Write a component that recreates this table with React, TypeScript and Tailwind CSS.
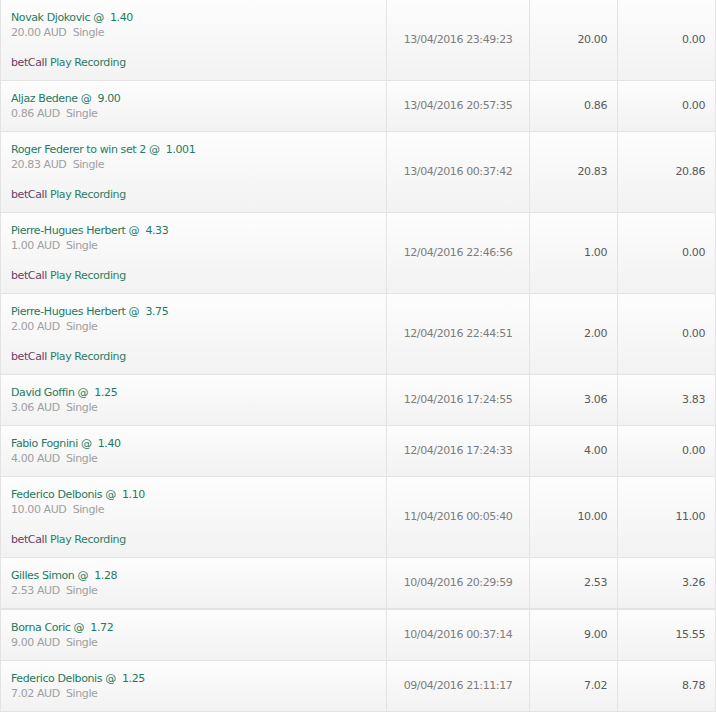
import React from 'react'

type Bet = {
  name: string
  odds: string
  stake: string
  date: string
  amount: string
  ret: string
  recording?: boolean
  thick?: boolean
}

const bets: Bet[] = [
  { name: 'Novak Djokovic', odds: '1.40', stake: '20.00', date: '13/04/2016 23:49:23', amount: '20.00', ret: '0.00', recording: true },
  { name: 'Aljaz Bedene', odds: '9.00', stake: '0.86', date: '13/04/2016 20:57:35', amount: '0.86', ret: '0.00' },
  { name: 'Roger Federer to win set 2', odds: '1.001', stake: '20.83', date: '13/04/2016 00:37:42', amount: '20.83', ret: '20.86', recording: true },
  { name: 'Pierre-Hugues Herbert', odds: '4.33', stake: '1.00', date: '12/04/2016 22:46:56', amount: '1.00', ret: '0.00', recording: true },
  { name: 'Pierre-Hugues Herbert', odds: '3.75', stake: '2.00', date: '12/04/2016 22:44:51', amount: '2.00', ret: '0.00', recording: true },
  { name: 'David Goffin', odds: '1.25', stake: '3.06', date: '12/04/2016 17:24:55', amount: '3.06', ret: '3.83' },
  { name: 'Fabio Fognini', odds: '1.40', stake: '4.00', date: '12/04/2016 17:24:33', amount: '4.00', ret: '0.00' },
  { name: 'Federico Delbonis', odds: '1.10', stake: '10.00', date: '11/04/2016 00:05:40', amount: '10.00', ret: '11.00', recording: true },
  { name: 'Gilles Simon', odds: '1.28', stake: '2.53', date: '10/04/2016 20:29:59', amount: '2.53', ret: '3.26', thick: true },
  { name: 'Borna Coric', odds: '1.72', stake: '9.00', date: '10/04/2016 00:37:14', amount: '9.00', ret: '15.55' },
  { name: 'Federico Delbonis', odds: '1.25', stake: '7.02', date: '09/04/2016 21:11:17', amount: '7.02', ret: '8.78' },
]

const BetRow = ({ bet }: { bet: Bet }) => (
  <div
    className={`flex bg-gradient-to-b from-[#fdfdfd] to-[#f2f2f2] border-[#e3e3e3] ${bet.thick ? 'border-b-2' : 'border-b'}`}
  >
    {/* selection + stake */}
    <div className="w-[386px] border-l border-[#e3e3e3] px-[10px] py-[10px] leading-[15px]">
      <div className="whitespace-pre text-[#1f7a63]">{`${bet.name} @  ${bet.odds}`}</div>
      <div className="whitespace-pre text-[#a0a0a0]">{`${bet.stake} AUD  Single`}</div>
      {bet.recording && (
        <div className="mt-[15px]">
          <span className="text-[#6a4066]">betCall</span>{' '}
          <span className="text-[#2b7f66]">Play Recording</span>
        </div>
      )}
    </div>
    <div className="w-[143px] border-l border-[#e3e3e3] flex items-center justify-center text-[#7d7d7d]">
      {bet.date}
    </div>
    <div className="w-[88px] border-l border-[#e3e3e3] flex items-center justify-end pr-[10px] text-[#5a5a5a]">
      {bet.amount}
    </div>
    <div className="w-[99px] border-l border-r border-[#e3e3e3] flex items-center justify-end pr-[10px] text-[#5a5a5a]">
      {bet.ret}
    </div>
  </div>
)

export default function App() {
  return (
    <div className="w-[716px] h-[712px] overflow-hidden bg-white font-['DejaVu_Sans',sans-serif] text-[11px] tracking-[-0.4px]">
      {bets.map((bet, i) => (
        <BetRow key={i} bet={bet} />
      ))}
    </div>
  )
}
